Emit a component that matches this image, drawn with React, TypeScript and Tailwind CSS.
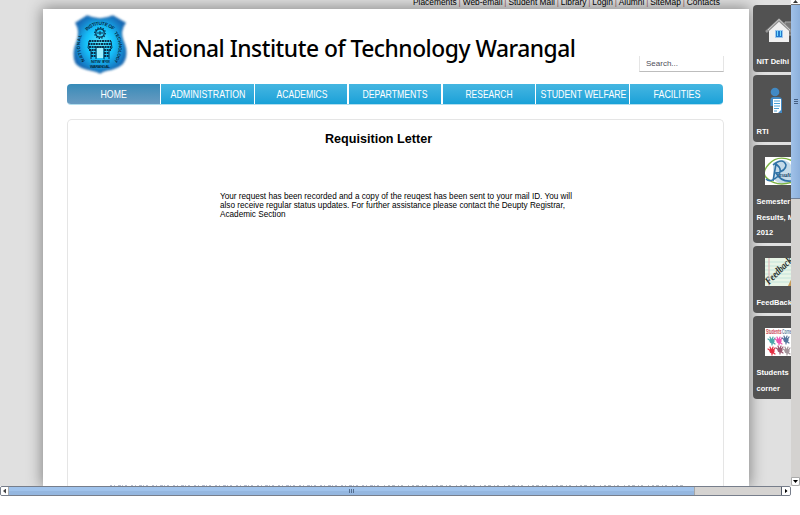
import React from "react";

const topLinks = ["Placements", "Web-email", "Student Mail", "Library", "Login", "Alumni", "SiteMap", "Contacts"];

const navItems = [
  { label: "HOME", width: 26.3 },
  { label: "ADMINISTRATION", width: 75 },
  { label: "ACADEMICS", width: 51 },
  { label: "DEPARTMENTS", width: 65 },
  { label: "RESEARCH", width: 47 },
  { label: "STUDENT WELFARE", width: 86 },
  { label: "FACILITIES", width: 47 },
];

function Crest() {
  return (
    <svg width="58" height="64" viewBox="0 0 58 64" className="shrink-0">
      <defs>
        <radialGradient id="crest" cx="50%" cy="48%" r="55%">
          <stop offset="0" stopColor="#5be8ff" />
          <stop offset="0.5" stopColor="#12c0fa" />
          <stop offset="1" stopColor="#1766b4" />
        </radialGradient>
        <filter id="soft" x="-10%" y="-10%" width="120%" height="120%">
          <feGaussianBlur stdDeviation="0.8" />
        </filter>
        <path id="arcTop" d="M16 18 Q29 6 43 18" />
        <path id="arcLeft" d="M14 48 Q4 31 14 17" />
        <path id="arcRight" d="M43 20 Q53 33 42 51" />
      </defs>
      <path
        d="M16 3 Q29 9 42 3 L54 10 Q48 18 52 28 Q58 42 51 51 Q45 56 36 57 Q31 58 29 60 Q26 58 20 57 Q9 55 5 50 Q1 41 6 29 Q10 18 5 10 Z"
        fill="url(#crest)" stroke="#246fb2" strokeWidth="1.5" filter="url(#soft)"
      />
      <g fontFamily="Liberation Sans, sans-serif" fontWeight="bold" fill="#05283e">
        <text fontSize="4.8"><textPath href="#arcTop" textLength="29">INSTITUTE OF</textPath></text>
        <text fontSize="4.5"><textPath href="#arcLeft" textLength="27">NATIONAL</textPath></text>
        <text fontSize="4.5"><textPath href="#arcRight" textLength="31">TECHNOLOGY</textPath></text>
        <text x="20" y="50" fontSize="4" textLength="19">NITW वरंगल</text>
        <text x="19" y="54.5" fontSize="4" textLength="20">WARANGAL</text>
      </g>
      <g stroke="#08304c" fill="none">
        <circle cx="29" cy="20" r="4.2" strokeWidth="1.2" />
        <circle cx="29" cy="20" r="5.3" strokeWidth="1.2" strokeDasharray="1.4 1.3" />
        <path d="M26 20h6M29 18v4" />
        <path d="M18 28h22M17 31h24M18 34h22M18 37h7M33 37h7M20 40h5M33 40h5M20 43h5M33 43h5" strokeWidth="2" strokeDasharray="2 .6" />
        <path d="M18 28l-1 7 3 2v9M40 28l1 7-3 2v9M25 46V34h8v12" />
      </g>
      <path d="M26 35h6v10h-6z" fill="#9defff" />
    </svg>
  );
}

function HouseIcon() {
  return (
    <svg width="28" height="28" viewBox="0 0 28 28">
      <path d="M20 5h7v13h-7z" fill="#777" stroke="#aaa" />
      <path d="M4 13L14 4l10 9v12H4z" fill="#f1f1f1" />
      <path d="M1 15L14 3l13 12" fill="none" stroke="#929292" strokeWidth="2.6" />
      <path d="M3 13L14 2.5 25 13" fill="none" stroke="#ddd" strokeWidth=".8" />
      <path d="M10.5 13.5h7v7h-7z" fill="#2778cc" stroke="#9cc9ef" />
      <path d="M12 14h1v5h-1zM15 14h1v5h-1z" fill="#74dfff" />
    </svg>
  );
}

function PersonIcon() {
  return (
    <svg width="28" height="28" viewBox="0 0 28 28">
      <circle cx="10" cy="5" r="4.3" fill="#4189c4" />
      <path d="M5.5 13q0-3 3-3h4.500q4 0 4 3v13H8v-7H5.500z" fill="#4189c4" />
      <path d="M8 12h8v11l-3 3H8z" fill="#fff" />
      <path d="M9 14h6M9 16.500h6M9 19h6M9 21.500h5M9 24h3" stroke="#4aa1d7" />
    </svg>
  );
}

function ResultsIcon() {
  return (
    <svg width="28" height="28" viewBox="0 0 28 28" className="bg-white">
      <path d="M8 6Q20-1 27 9v14Q17 32 8 21z" fill="#c5dbe9" />
      <path d="M28 4Q13-3 4 7t-1 15q9 8 25 3" fill="none" stroke="#7cb342" strokeWidth="1.4" />
      <path d="M1 22Q5 26 12 20 19 13 11 7L8 24M8 8q10-8 13 0 0 6-10 8 5 9 15 8" fill="none" stroke="#2f72a6" strokeWidth="1.6" />
      <text x="14" y="20" fontSize="6" fontStyle="italic" fontWeight="bold" fontFamily="Liberation Serif, serif" textLength="14" lengthAdjust="spacingAndGlyphs" fill="#17476a">esults</text>
    </svg>
  );
}

function FeedbackIcon() {
  return (
    <svg width="28" height="28" viewBox="0 0 28 28" className="bg-[#e8f5e7]">
      <path d="M0 4h28M0 8h28M0 12h28M0 16h28M0 20h28M0 24h28" stroke="#b6ddd6" strokeWidth=".7" />
      <path d="M4 0v28" stroke="#e0aeb2" />
      <path d="M23 28l5-11v11z" fill="#c89b58" />
      <text x="4" y="27" transform="rotate(-45 4 27)" fontSize="10.5" fontStyle="italic" fontWeight="bold" fontFamily="Liberation Serif, serif" textLength="34" lengthAdjust="spacingAndGlyphs" fill="#252e2a">Feedback</text>
    </svg>
  );
}

function Hand({ x, y, color }: { x: number; y: number; color: string }) {
  return (
    <g transform={`translate(${x} ${y})`} stroke={color} strokeWidth="1.2" strokeLinecap="round">
      <circle r="2" fill={color} />
      <path d="M-1 0l-3-2M-1-1l-1-3M0-1l1-3M1 0l2-3M0 1l3 2M0 1v3" />
    </g>
  );
}

function StudentsIcon() {
  return (
    <svg width="28" height="28" viewBox="0 0 28 28" className="bg-white">
      <g fontSize="6.5" fontWeight="bold" fontFamily="Liberation Sans, sans-serif">
        <text x="1" y="6" textLength="15.5" lengthAdjust="spacingAndGlyphs" fill="#c63d4d">Students</text>
        <text x="17" y="6" textLength="11" lengthAdjust="spacingAndGlyphs" fill="#607c9e">Corner</text>
      </g>
      <Hand x={7} y={13} color="#4ba8ab" />
      <Hand x={14} y={13} color="#ee55b1" />
      <Hand x={21} y={12} color="#52749d" />
      <Hand x={7} y={23} color="#e52e42" />
      <Hand x={15} y={22} color="#9b5870" />
      <Hand x={22} y={23} color="#a3969b" />
    </svg>
  );
}

const sideCards = [
  { icon: <HouseIcon />, lines: ["NIT Delhi"] },
  { icon: <PersonIcon />, lines: ["RTI"] },
  { icon: <ResultsIcon />, lines: ["Semester", "Results, May", "2012"] },
  { icon: <FeedbackIcon />, lines: ["FeedBack"] },
  { icon: <StudentsIcon />, lines: ["Students", "corner"] },
];

function FooterTips() {
  return (
    <svg width="576" height="2" className="ml-[42px] block">
      <path d="M0 1.5h270" stroke="#b9c0d2" strokeDasharray="2 2 1 3 3 1 1 2 2 4" />
      <path d="M274 1.5h302" stroke="#b9c0c9" strokeDasharray="1 3 2 2 3 3 1 2 2 5" />
    </svg>
  );
}

export default function App() {
  return (
    <div className="h-[515px] w-[800px] overflow-hidden bg-white font-['Liberation_Sans',Arial,sans-serif] text-black">
      <div className="flex h-[486px]">
        <div className="flex w-[791px] shrink-0 overflow-hidden bg-[#e0e0e0] pl-[42.5px]">
          <div className="flex w-[706.5px] shrink-0 flex-col">
            <div className="relative z-10 flex h-[9px] items-end justify-end pr-[29px]">
              <div className="flex h-[13px] w-[307px] items-center justify-between whitespace-nowrap text-[8.4px] leading-[13px]">
                {topLinks.map((link, i) => (
                  <React.Fragment key={link}>
                    {i > 0 && <span className="text-[#8b5757]">|</span>}
                    <span>{link}</span>
                  </React.Fragment>
                ))}
              </div>
            </div>
            <main className="flex h-[477px] flex-col bg-white pl-[24.5px] shadow-[0_0_14px_1px_rgba(0,0,0,0.42)]">
              <header className="flex h-[75px]">
                <div className="pl-[4px] pt-[4px]"><Crest /></div>
                <h1 className="ml-[6px] mt-[22px] w-[444px] whitespace-nowrap font-['Noto_Sans','Open_Sans',sans-serif] text-[22.8px] font-medium leading-[36px] tracking-[-0.48px]">
                  National Institute of Technology Warangal
                </h1>
                <div className="ml-[60px] mt-[47px] h-[16px] w-[85px] shrink-0 border border-t-0 border-[#e5e5e5] border-b-[#bdbdbd] pl-[6px] text-[8px] leading-[16px] text-[#4f4f5a]">
                  Search...
                </div>
              </header>
              <nav className="grid h-[21px] w-[656px] grid-cols-7 gap-[1.3px] overflow-hidden rounded-[4px] border-b border-[#b2deee]">
                {navItems.map(({ label, width }, i) => (
                  <div
                    key={label}
                    className={`flex items-center justify-center ${i === 0 ? "bg-linear-to-b from-[#368bb8] to-[#689bc1]" : "bg-linear-to-b from-[#44b6e1] to-[#17a1d8]"}`}
                  >
                    <svg width={width} height="14" className="overflow-visible">
                      <text x="0.5" y="11" fontSize="10.2" fill="white" textLength={width} lengthAdjust="spacingAndGlyphs">{label}</text>
                    </svg>
                  </div>
                ))}
              </nav>
              <section className="mt-[14px] flex h-[367px] w-[657px] flex-col rounded-t-[5px] border border-b-0 border-[#e5e5e5]">
                <h2 className="ml-[257px] mt-[10px] whitespace-nowrap text-[12.6px] font-bold leading-[18px]">Requisition Letter</h2>
                <p className="ml-[152px] mt-[43.5px] whitespace-nowrap text-[8.2px] leading-[9.4px]">
                  Your request has been recorded and a copy of the reuqest has been sent to your mail ID. You will<br />
                  also receive regular status updates. For further assistance please contact the Deupty Registrar,<br />
                  Academic Section
                </p>
                <div className="mt-auto"><FooterTips /></div>
              </section>
            </main>
          </div>
          <aside className="relative z-10 ml-[4px] flex shrink-0 flex-col gap-[3px] pt-[5px]">
            {sideCards.map(({ icon, lines }) => (
              <div key={lines[0]} className="w-[60px] rounded-[4px] bg-[#525252] pb-[2.4px]">
                <div className="ml-[12px] h-[49px] pt-[12px]">{icon}</div>
                {lines.map((line) => (
                  <div key={line} className="whitespace-nowrap pl-[3.5px] text-[7.5px] font-bold leading-[15.6px] text-white">{line}</div>
                ))}
              </div>
            ))}
          </aside>
        </div>
        <div className="flex w-[9px] flex-col bg-[#d4d2d0]">
          <div className="flex h-[5px] items-start justify-center border-b border-[#777] bg-white">
            <div className="h-[3px] w-[5px] bg-[#333] [clip-path:polygon(50%_0,100%_100%,0_100%)]" />
          </div>
          <div className="flex h-[194px] flex-col items-center justify-center gap-px border-b border-[#718096] bg-linear-to-r from-[#a0c1e8] to-[#8cb0dc]">
            <div className="h-px w-[4px] bg-[#455f83]" /><div className="h-px w-[4px] bg-[#455f83]" /><div className="h-px w-[4px] bg-[#455f83]" />
          </div>
          <div className="mt-auto flex h-[9px] items-center justify-center rounded-b-[2px] border border-[#aaa] bg-white">
            <div className="h-[3px] w-[5px] bg-black [clip-path:polygon(0_0,100%_0,50%_100%)]" />
          </div>
        </div>
      </div>
      <div className="flex h-[10px] w-[791px] overflow-hidden rounded-[2px] border border-[#777e8b] bg-[#d5d3d1]">
        <div className="flex w-[8px] items-center justify-center border-r border-[#aaa] bg-white">
          <div className="h-[5px] w-[3px] bg-[#444] [clip-path:polygon(100%_0,100%_100%,0_50%)]" />
        </div>
        <div className="flex w-[686px] items-center justify-center gap-px border-r border-[#a7a7a7] bg-linear-to-b from-[#a0c3ec] from-50% to-[#95b7e0] to-50%">
          <div className="h-[4px] w-px bg-[#536d90]" /><div className="h-[4px] w-px bg-[#536d90]" /><div className="h-[4px] w-px bg-[#536d90]" />
        </div>
        <div className="ml-auto flex w-[9px] items-center justify-center border-l border-[#555d6b] bg-white">
          <div className="h-[5px] w-[3px] bg-black [clip-path:polygon(0_0,100%_50%,0_100%)]" />
        </div>
      </div>
    </div>
  );
}
